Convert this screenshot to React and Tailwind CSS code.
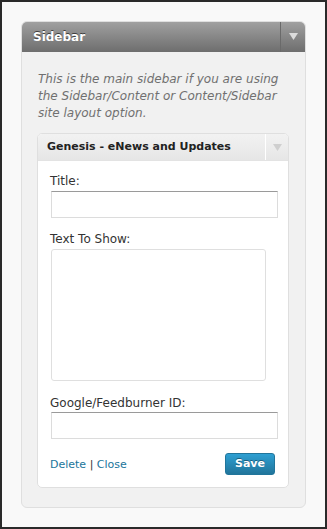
import React from 'react';

const font = { fontFamily: '"DejaVu Sans", "Liberation Sans", sans-serif' };

const Arrow = ({ color }) => (
  <svg width="9" height="7" viewBox="0 0 9 7">
    <path d="M0 0 L9 0 L4.5 7 Z" fill={color} />
  </svg>
);

const Field = ({ label, children }) => (
  <div className="flex flex-col">
    <label className="text-[12px] leading-[15px] text-[#333]">{label}</label>
    {children}
  </div>
);

export default function App() {
  return (
    <div className="w-[327px] h-[529px] border-2 border-[#2a2a2a] bg-[#f9f9f9] pt-[19px] pl-[19px]" style={font}>
      <div className="w-[285px] h-[487px] rounded-[6px] border border-[#dfdfdf] bg-[#f1f1f1] overflow-hidden">
        {/* panel header */}
        <div className="h-[31px] -mx-px -mt-px flex items-stretch bg-gradient-to-b from-[#a2a2a2] to-[#6e6e6e] rounded-t-[6px]">
          <div className="flex-1 flex items-center pl-[12px] text-white font-bold text-[12px] [text-shadow:0_-1px_0_#3f3f3f]">
            Sidebar
          </div>
          <div className="w-[26px] border-l border-[#6a6a6a] flex items-center justify-center">
            <Arrow color="#dcdcdc" />
          </div>
        </div>

        <p className="px-[16px] pt-[19px] text-[12px] leading-[17px] italic text-[#707070]">
          This is the main sidebar if you are using the Sidebar/Content or Content/Sidebar site layout option.
        </p>

        {/* widget */}
        <div className="ml-[15px] mt-[11px] w-[252px] rounded-[5px] border border-[#dfdfdf] bg-white overflow-hidden">
          <div className="h-[27px] flex bg-gradient-to-b from-[#f2f2f2] to-[#e6e6e6] border-b border-[#e3e3e3]">
            <div className="flex-1 flex items-center pl-[9px] text-[11px] font-bold text-[#222]">
              Genesis - eNews and Updates
            </div>
            <div className="w-[23px] border-l border-white flex items-center justify-center">
              <Arrow color="#cfcfcf" />
            </div>
          </div>

          <div className="pl-[12px] pr-[10px] pt-[13px] pb-[12px] flex flex-col">
            <Field label="Title:">
              <input className="mt-[2px] w-[227px] h-[27px] ml-px border border-[#dcdcdc] border-t-[#9a9a9a] bg-white outline-none" />
            </Field>
            <div className="mt-[14px]">
              <Field label="Text To Show:">
                <textarea className="mt-[2px] ml-px w-[215px] h-[132px] rounded-[3px] border border-[#dfdfdf] bg-white resize-none outline-none" />
              </Field>
            </div>
            <div className="mt-[15px]">
              <Field label="Google/Feedburner ID:">
                <input className="mt-[1px] w-[227px] h-[27px] ml-px border border-[#dcdcdc] border-t-[#9a9a9a] bg-white outline-none" />
              </Field>
            </div>
            <div className="mt-[14px] flex items-center justify-between pr-[3px]">
              <div className="text-[11px] pt-[3px]">
                <a href="#" className="text-[#21759b]">Delete</a>
                <span className="text-[#333]"> | </span>
                <a href="#" className="text-[#21759b]">Close</a>
              </div>
              <button className="w-[50px] h-[22px] rounded-[3px] border border-[#21759b] bg-gradient-to-b from-[#2e9fd2] to-[#21759b] text-white text-[11px] font-bold [text-shadow:0_-1px_0_#1b5f80]">
                Save
              </button>
            </div>
          </div>
        </div>
      </div>
    </div>
  );
}
